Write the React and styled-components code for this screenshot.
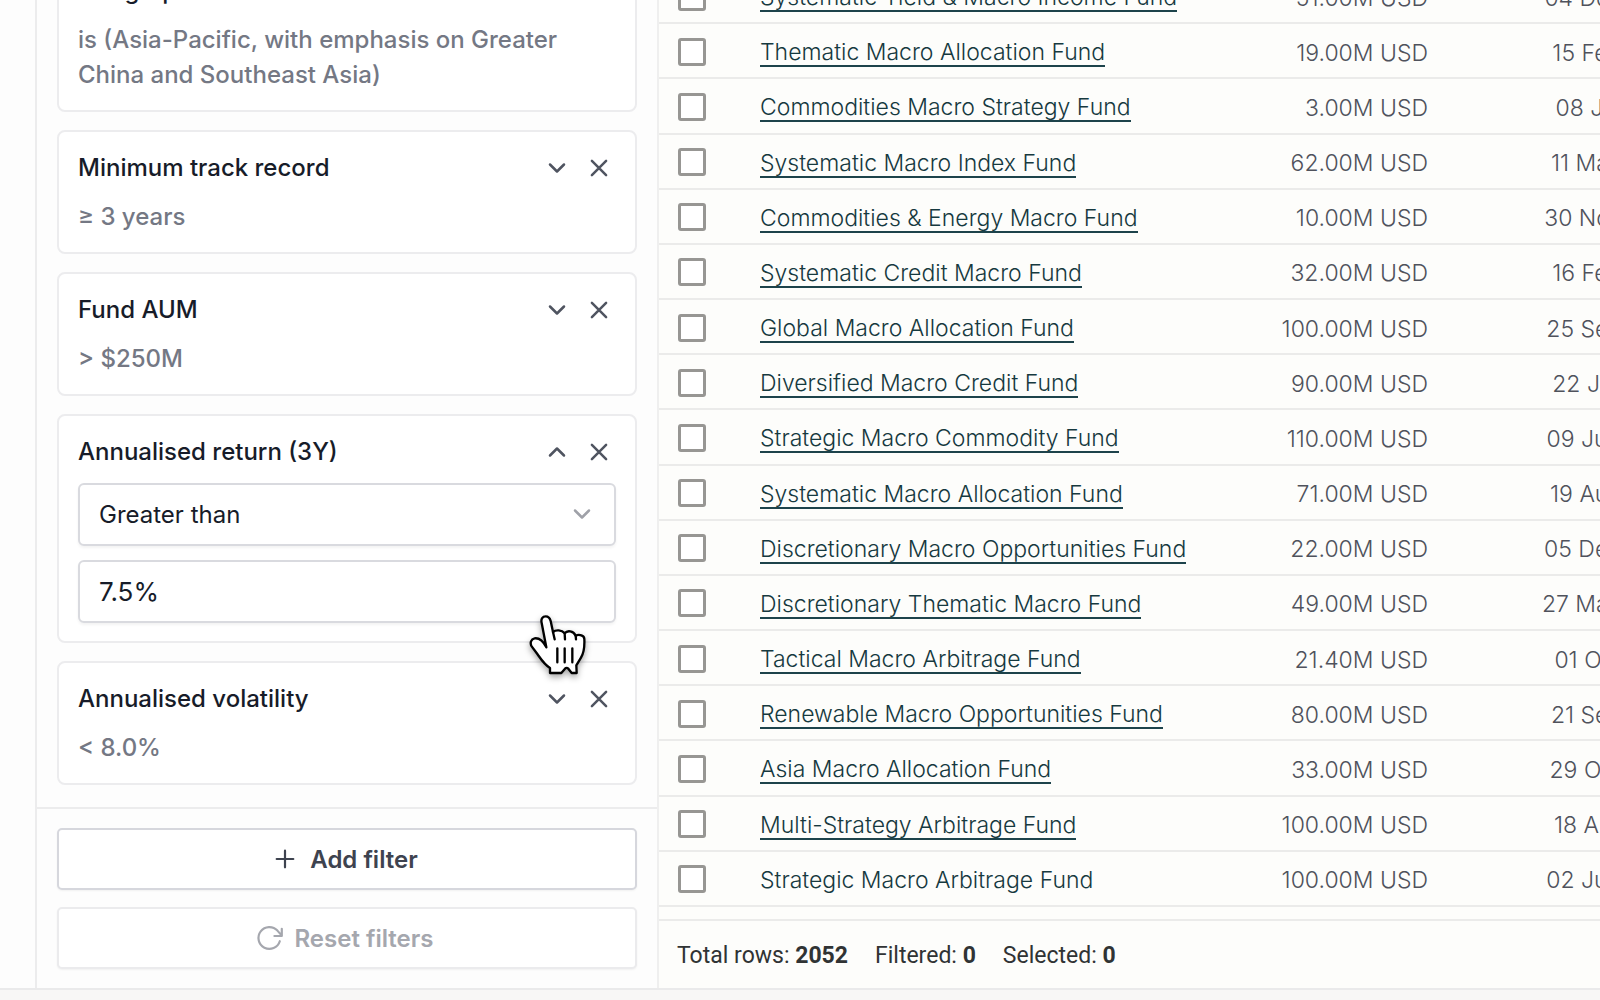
import { useState } from 'react';
import styled, { createGlobalStyle, css } from 'styled-components';

const GlobalStyle = createGlobalStyle`
  *, *::before, *::after {
    box-sizing: border-box;
  }

  body {
    margin: 0;
    background-color: #f8f7f6;
    color: #171c29;
    font-family: 'Inter', sans-serif;
  }

  button, input, select {
    font-family: inherit;
  }
`;

const Page = styled.div`
  display: flex;
  flex-direction: column;
  height: 100vh;
  padding-bottom: 10px;
  overflow: hidden;
`;

const Workspace = styled.div`
  display: flex;
  flex: 1;
  min-height: 0;
  padding-left: 35px;
  background-color: #fdfdfd;
  border-bottom: 2px solid #eaeaeb;
`;

// Filters sidebar
const Sidebar = styled.aside`
  display: flex;
  flex-direction: column;
  flex: 0 0 624px;
  border-left: 2px solid #ececed;
  border-right: 2px solid #efefef;
`;

const FilterList = styled.div`
  display: flex;
  flex: 1;
  flex-direction: column;
  justify-content: flex-end;
  gap: 18px;
  min-height: 0;
  padding: 22px 20px;
  overflow: hidden;
`;

const Card = styled.section`
  position: relative;
  flex-shrink: 0;
  padding: 18px 19px;
  background-color: #fff;
  border: 2px solid #ececee;
  border-radius: 8px;
`;

const CardHeader = styled.div`
  display: flex;
  align-items: center;
  gap: 7px;
  height: 35px;
  margin-bottom: 14px;
`;

const CardTitle = styled.h3`
  flex: 1;
  margin: 0;
  font-size: 24px;
  font-weight: 500;
  line-height: 35px;
`;

const CardText = styled.p`
  margin: 0;
  color: #747884;
  font-size: 24px;
  font-weight: 500;
  line-height: 35px;
`;

const IconButton = styled.button`
  display: flex;
  align-items: center;
  justify-content: center;
  width: 35px;
  height: 35px;
  padding: 0;
  color: #4f5460;
  background: none;
  border: none;
  cursor: pointer;
`;

const Fields = styled.div`
  display: flex;
  flex-direction: column;
  gap: 14px;
`;

const Field = styled.div`
  position: relative;
  height: 63px;
`;

const fieldStyles = css`
  width: 100%;
  height: 100%;
  padding: 0 19px;
  color: #171c29;
  background-color: #fff;
  border: 2px solid #d9dadf;
  border-radius: 6px;
  box-shadow: 0 2px 3px rgba(0, 0, 0, 0.05);
  outline: none;
`;

const Select = styled.select`
  ${fieldStyles}
  appearance: none;
  font-size: 24px;
`;

const Input = styled.input`
  ${fieldStyles}
  font-size: 26px;
`;

const SelectArrow = styled.span`
  position: absolute;
  top: 17px;
  right: 20px;
  display: flex;
  color: #9fa1a8;
  pointer-events: none;
`;

const Pointer = styled.svg`
  position: absolute;
  top: 52px;
  right: 29px;
  z-index: 2;
  width: 60px;
  height: 68px;
  overflow: visible;
  filter: drop-shadow(0 3px 3px rgba(0, 0, 0, 0.35));
  pointer-events: none;
`;

const SidebarActions = styled.div`
  display: flex;
  flex-direction: column;
  gap: 17px;
  padding: 19px 20px;
  border-top: 2px solid #ececed;
`;

const ActionButton = styled.button`
  display: flex;
  align-items: center;
  justify-content: center;
  gap: 11px;
  height: 62px;
  padding: 0 5px 0 0;
  color: #3e434f;
  font-size: 24px;
  font-weight: 600;
  background-color: #fff;
  border: 2px solid #d6d7dd;
  border-radius: 5px;
  box-shadow: 0 1px 2px rgba(0, 0, 0, 0.05);
  cursor: pointer;

  &:disabled {
    color: #a5a7ae;
    border-color: #ebebed;
    cursor: default;
  }
`;

// Funds table
const Main = styled.main`
  display: flex;
  flex: 1;
  flex-direction: column;
  min-width: 0;
  background-color: #fdfdfb;
`;

const TableArea = styled.div`
  display: flex;
  flex: 1;
  flex-direction: column;
  justify-content: flex-end;
  min-height: 0;
  padding-bottom: 12px;
  overflow: hidden;
`;

const Table = styled.table`
  flex-shrink: 0;
  width: 1020px;
  height: calc(100% + 31px);
  table-layout: fixed;
  border-collapse: separate;
  border-spacing: 0;
`;

const Cell = styled.td`
  padding: 4px 0 0;
  color: #4f525c;
  font-size: 23px;
  font-weight: 350;
  line-height: 28px;
  text-align: ${({ $align }) => $align || 'left'};
  white-space: nowrap;
  vertical-align: middle;
  border-bottom: 2px solid #ebebea;
`;

const CheckCell = styled(Cell)`
  padding: 2px 0 0 19px;
`;

const Checkbox = styled.input`
  display: block;
  width: 28px;
  height: 28px;
  margin: 0;
  appearance: none;
  background-color: #fff;
  border: 3px solid #979693;
  border-radius: 3px;

  &:checked {
    background-color: #979693;
  }
`;

const FundLink = styled.a`
  display: inline-block;
  color: #16393f;
  line-height: 26px;
  text-decoration: none;
  border-bottom: 2px solid ${({ $plain }) => ($plain ? 'transparent' : '#1d434b')};
`;

const StatusBar = styled.footer`
  display: flex;
  align-items: center;
  gap: 27px;
  height: 69px;
  padding: 2px 18px 0;
  color: #303334;
  font-family: 'Roboto', sans-serif;
  font-size: 23px;
  border-top: 2px solid #ebebea;

  strong {
    font-weight: 700;
  }
`;

const funds = [
  ['Systematic Yield & Macro Income Fund', '51.00M USD', '04 Dec 2017'],
  ['Thematic Macro Allocation Fund', '19.00M USD', '15 Feb 2019'],
  ['Commodities Macro Strategy Fund', '3.00M USD', '08 Jul 2017'],
  ['Systematic Macro Index Fund', '62.00M USD', '11 May 2016'],
  ['Commodities & Energy Macro Fund', '10.00M USD', '30 Nov 2017'],
  ['Systematic Credit Macro Fund', '32.00M USD', '16 Feb 2019'],
  ['Global Macro Allocation Fund', '100.00M USD', '25 Sep 2017'],
  ['Diversified Macro Credit Fund', '90.00M USD', '22 Jan 2011'],
  ['Strategic Macro Commodity Fund', '110.00M USD', '09 Jun 2018'],
  ['Systematic Macro Allocation Fund', '71.00M USD', '19 Aug 2017'],
  ['Discretionary Macro Opportunities Fund', '22.00M USD', '05 Dec 2018'],
  ['Discretionary Thematic Macro Fund', '49.00M USD', '27 May 2018'],
  ['Tactical Macro Arbitrage Fund', '21.40M USD', '01 Oct 2019'],
  ['Renewable Macro Opportunities Fund', '80.00M USD', '21 Sep 2017'],
  ['Asia Macro Allocation Fund', '33.00M USD', '29 Oct 2018'],
  ['Multi-Strategy Arbitrage Fund', '100.00M USD', '18 Apr 2018'],
  ['Strategic Macro Arbitrage Fund', '100.00M USD', '02 Jun 2018'],
];

const Chevron = ({ up }) => (
  <svg width="28" height="28" viewBox="0 0 28 28" fill="none" stroke="currentColor" strokeWidth="2.5" strokeLinecap="round" strokeLinejoin="round">
    <path d={up ? 'M7 17.5 14 10.5 21 17.5' : 'M7 10.5 14 17.5 21 10.5'} />
  </svg>
);

const Cross = () => (
  <svg width="28" height="28" viewBox="0 0 28 28" fill="none" stroke="currentColor" strokeWidth="2.5" strokeLinecap="round">
    <path d="M6.9 6.9 21.1 21.1M21.1 6.9 6.9 21.1" />
  </svg>
);

const Plus = () => (
  <svg width="28" height="28" viewBox="0 0 28 28" fill="none" stroke="currentColor" strokeWidth="2.2" strokeLinecap="round">
    <path d="M14 5.7V22.3M5.7 14H22.3" />
  </svg>
);

const Refresh = () => (
  <svg width="28" height="28" viewBox="0 0 28 28" fill="none" stroke="currentColor" strokeWidth="2.2" strokeLinecap="round" strokeLinejoin="round">
    <path d="M23.8 17.2A10.9 10.9 0 1 1 21.4 6.6L25.6 11.4M25.8 4.8V12H18.4" />
  </svg>
);

const HandPointer = () => (
  <Pointer viewBox="381 636 180 204" aria-hidden="true">
    <path
      d="M439 742 425 669C422 656 428 649 437 649C446 649 450 655 452 663L459 696C467 689 485 689 494 700C502 690 520 692 527 707C538 702 553 706 553 717C554 738 552 758 543 773L529 796 530 819H515L505 806Q500 801 495 806L484 819H450V804C432 793 424 779 412 762L395 739C389 729 393 717 404 715C422 713 432 728 439 742Z"
      fill="#fff"
      stroke="#000"
      strokeWidth="7"
      strokeLinejoin="round"
    />
    <path
      d="M459 696 464 718M494 700 495 718M527 707 528 718M472 745V787M494 745V787M517 745V787"
      fill="none"
      stroke="#000"
      strokeWidth="7"
      strokeLinecap="round"
    />
  </Pointer>
);

const FilterCard = ({ title, text, open, children }) => (
  <Card>
    <CardHeader>
      <CardTitle>{title}</CardTitle>
      <IconButton type="button" aria-label={`Toggle ${title}`} aria-expanded={!!open}>
        <Chevron up={open} />
      </IconButton>
      <IconButton type="button" aria-label={`Remove ${title}`}>
        <Cross />
      </IconButton>
    </CardHeader>
    {text && <CardText>{text}</CardText>}
    {children}
  </Card>
);

const App = () => {
  const [value, setValue] = useState('7.5%');

  return (
    <>
      <GlobalStyle />
      <Page>
        <Workspace>
          <Sidebar>
            <FilterList>
              <FilterCard
                title="Geographic focus"
                text="is (Asia-Pacific, with emphasis on Greater China and Southeast Asia)"
              />
              <FilterCard title="Minimum track record" text="≥ 3 years" />
              <FilterCard title="Fund AUM" text="> $250M" />
              <FilterCard title="Annualised return (3Y)" open>
                <Fields>
                  <Field>
                    <Select aria-label="Annualised return condition" defaultValue="gt">
                      <option value="gt">Greater than</option>
                      <option value="lt">Less than</option>
                    </Select>
                    <SelectArrow>
                      <Chevron />
                    </SelectArrow>
                  </Field>
                  <Field>
                    <Input
                      type="text"
                      aria-label="Annualised return value"
                      value={value}
                      onChange={(e) => setValue(e.target.value)}
                    />
                    <HandPointer />
                  </Field>
                </Fields>
              </FilterCard>
              <FilterCard title="Annualised volatility" text="< 8.0%" />
            </FilterList>
            <SidebarActions>
              <ActionButton type="button">
                <Plus />
                Add filter
              </ActionButton>
              <ActionButton type="button" disabled>
                <Refresh />
                Reset filters
              </ActionButton>
            </SidebarActions>
          </Sidebar>
          <Main>
            <TableArea>
              <Table>
                <colgroup>
                  <col width="101" />
                  <col width="440" />
                  <col width="228" />
                  <col width="251" />
                </colgroup>
                <tbody>
                  {funds.map(([name, size, date], i) => (
                    <tr key={name}>
                      <CheckCell>
                        <Checkbox type="checkbox" aria-label={`Select ${name}`} />
                      </CheckCell>
                      <Cell>
                        <FundLink href="#" $plain={i === funds.length - 1}>
                          {name}
                        </FundLink>
                      </Cell>
                      <Cell $align="right">{size}</Cell>
                      <Cell $align="right">{date}</Cell>
                    </tr>
                  ))}
                </tbody>
              </Table>
            </TableArea>
            <StatusBar>
              <span>Total rows: <strong>2052</strong></span>
              <span>Filtered: <strong>0</strong></span>
              <span>Selected: <strong>0</strong></span>
            </StatusBar>
          </Main>
        </Workspace>
      </Page>
    </>
  );
};

export default App;
